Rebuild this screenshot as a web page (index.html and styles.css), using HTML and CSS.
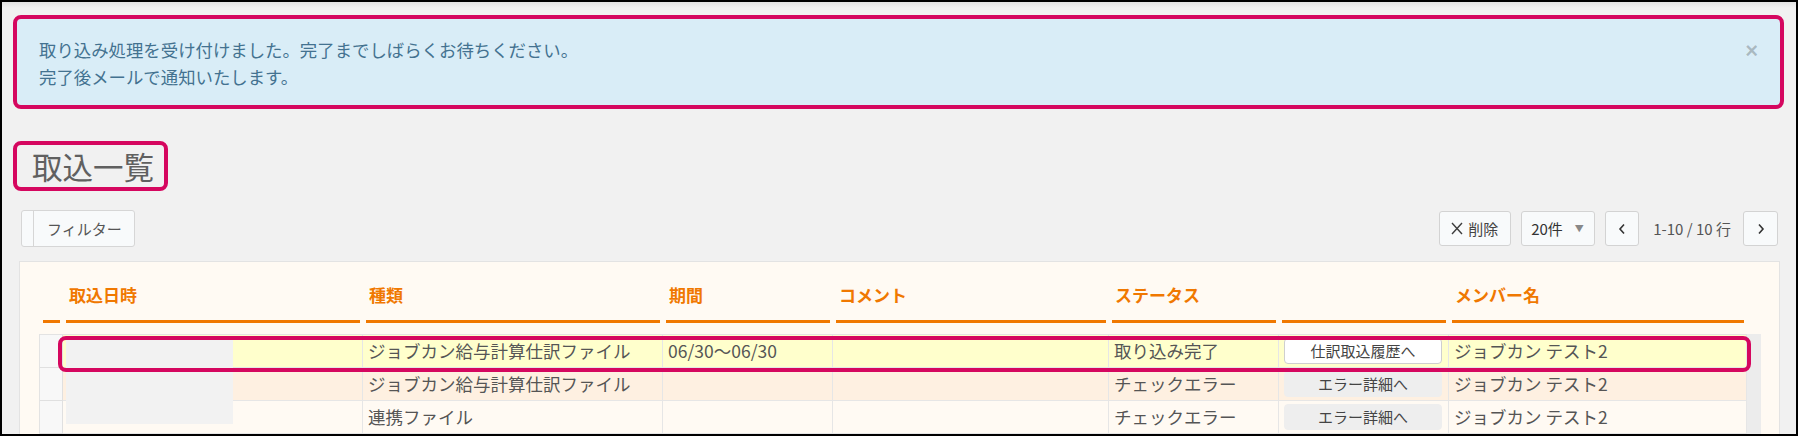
FILE: index.html
```html
<!DOCTYPE html>
<html lang="ja">
<head>
<meta charset="utf-8">
<title>取込一覧</title>
<link rel="stylesheet" href="styles.css">
</head>
<body>
<div class="frame">
  <div class="alert">
    <div class="alert-text">取り込み処理を受け付けました。完了までしばらくお待ちください。<br>完了後メールで通知いたします。</div>
    <span class="alert-close">×</span>
  </div>

  <h1 class="title">取込一覧</h1>

  <div class="toolbar">
    <div class="filter-btn"><span class="filter-handle"></span><span class="filter-label">フィルター</span></div>
    <div class="tools">
      <div class="btn btn-delete">
        <svg class="x-icon" width="12" height="13" viewBox="0 0 12 13"><path d="M1 1 L11 12 M11 1 L1 12" stroke="#3d3d3d" stroke-width="1.4" fill="none"/></svg>
        <span>削除</span>
      </div>
      <div class="btn btn-select"><span>20件</span><span class="caret">▼</span></div>
      <div class="btn btn-nav">
        <svg width="8" height="12" viewBox="0 0 8 12"><path d="M6 1.5 L2 6 L6 10.5" stroke="#333" stroke-width="1.6" fill="none"/></svg>
      </div>
      <span class="page-info">1-10 / 10 行</span>
      <div class="btn btn-nav btn-next">
        <svg width="8" height="12" viewBox="0 0 8 12"><path d="M2 1.5 L6 6 L2 10.5" stroke="#333" stroke-width="1.6" fill="none"/></svg>
      </div>
    </div>
  </div>

  <div class="panel">
    <div class="thead">
      <div class="th"></div>
      <div class="th">取込日時</div>
      <div class="th">種類</div>
      <div class="th">期間</div>
      <div class="th">コメント</div>
      <div class="th">ステータス</div>
      <div class="th"></div>
      <div class="th">メンバー名</div>
    </div>

    <div class="tbody-wrap">
      <div class="tbody">
        <div class="row row-yellow">
          <div class="cell num"></div>
          <div class="cell"></div>
          <div class="cell">ジョブカン給与計算仕訳ファイル</div>
          <div class="cell">06/30～06/30</div>
          <div class="cell"></div>
          <div class="cell">取り込み完了</div>
          <div class="cell act"><span class="act-btn act-white">仕訳取込履歴へ</span></div>
          <div class="cell">ジョブカン テスト2</div>
        </div>
        <div class="row row-orange">
          <div class="cell num"></div>
          <div class="cell"></div>
          <div class="cell">ジョブカン給与計算仕訳ファイル</div>
          <div class="cell"></div>
          <div class="cell"></div>
          <div class="cell">チェックエラー</div>
          <div class="cell act"><span class="act-btn act-gray">エラー詳細へ</span></div>
          <div class="cell">ジョブカン テスト2</div>
        </div>
        <div class="row row-cream">
          <div class="cell num"></div>
          <div class="cell"></div>
          <div class="cell">連携ファイル</div>
          <div class="cell"></div>
          <div class="cell"></div>
          <div class="cell">チェックエラー</div>
          <div class="cell act"><span class="act-btn act-gray">エラー詳細へ</span></div>
          <div class="cell">ジョブカン テスト2</div>
        </div>
      </div>
      <div class="strip"></div>
      <div class="redact"></div>
      <div class="row-mark"></div>
    </div>
  </div>
</div>
</body>
</html>
```

FILE: styles.css
```css
* { box-sizing: border-box; }

html, body {
  margin: 0;
  padding: 0;
}

body {
  font-family: "Noto Sans CJK JP", "Noto Sans", sans-serif;
  color: #555;
  background: #f1f1f1;
}

.frame {
  width: 1798px;
  height: 436px;
  border: 2px solid #000;
  overflow: hidden;
  background: linear-gradient(to bottom, #e2e2e2 0, #f1f1f1 6px) #f1f1f1;
}

/* ---------- alert ---------- */
.alert {
  margin: 13px 12px 0 11px;
  height: 94px;
  border: 4px solid #d5075f;
  border-radius: 8px;
  background: #d9edf7;
  padding: 17px 22px 0 22px;
  display: flex;
  align-items: flex-start;
}

.alert-text {
  flex: 1;
  font-size: 17.4px;
  line-height: 27px;
  color: #437290;
}

.alert-close {
  font-family: "Liberation Sans", sans-serif;
  font-size: 22px;
  font-weight: 700;
  line-height: 29px;
  color: rgba(0, 0, 0, 0.22);
}

/* ---------- title ---------- */
.title {
  margin: 32px 0 0 11px;
  width: fit-content;
  height: 50px;
  border: 4px solid #d5075f;
  border-radius: 8px;
  padding: 0 10px 0 15px;
  font-size: 30.5px;
  line-height: 42px;
  font-weight: 400;
  color: #606060;
}

/* ---------- toolbar ---------- */
.toolbar {
  margin: 19px 18px 0 19px;
  height: 37px;
  display: flex;
  justify-content: space-between;
  align-items: center;
}

.filter-btn {
  height: 37px;
  width: 114px;
  display: flex;
  border: 1px solid #d6d6d6;
  border-radius: 3px;
  background: #f8fafb;
}

.filter-handle {
  width: 12px;
  border-right: 1px solid #d6d6d6;
}

.filter-label {
  padding-left: 13px;
  font-size: 15px;
  line-height: 35px;
  color: #555;
}

.tools {
  display: flex;
  align-items: center;
  height: 37px;
}

.btn {
  height: 35px;
  border: 1px solid #d3d3d3;
  border-radius: 3px;
  background: #f8fafb;
  display: flex;
  align-items: center;
  font-size: 15px;
  color: #444;
}

.btn-delete {
  width: 72px;
  padding-left: 11px;
  gap: 5px;
}

.btn-select {
  width: 74px;
  margin-left: 10px;
  padding-left: 9px;
  color: #333;
}

.caret {
  font-size: 9px;
  color: #888;
  margin-left: 12px;
}

.btn-nav {
  width: 34px;
  margin-left: 10px;
  justify-content: center;
}

.btn-next {
  width: 35px;
  margin-left: 12px;
}

.page-info {
  margin-left: 14px;
  font-size: 15px;
  color: #555;
}

/* ---------- panel ---------- */
.panel {
  margin: 14px 16px 0 17px;
  height: 300px;
  border: 1px solid #e3e3e3;
  background: #fffaf3;
  padding: 0 18px 0 19px;
}

.thead,
.row {
  display: grid;
  grid-template-columns: 23px 300px 300px 170px 276px 170px 170px 298px;
}

.thead {
  padding-left: 1px;
}

.th {
  margin: 0 3px;
  padding: 21px 0 13px 3px;
  line-height: 24px;
  height: 61px;
  font-size: 17px;
  font-weight: 700;
  color: #f07800;
  border-bottom: 3px solid #f07800;
  white-space: nowrap;
}

.tbody-wrap {
  position: relative;
  margin-top: 11px;
  display: flex;
}

.tbody {
  border-top: 1px solid #e3e3e3;
  border-left: 1px solid #e3e3e3;
}

.cell {
  height: 33px;
  border-right: 1px solid #e6e6e6;
  border-bottom: 1px solid #e6e6e6;
  padding-left: 5px;
  font-size: 17.5px;
  line-height: 32px;
  white-space: nowrap;
  color: #555;
}

.row-yellow .cell { background: #ffffcc; }
.row-orange .cell { background: #fef0e1; }
.row-cream .cell { background: #fffaf3; }
.row .cell.num { background: #f8f8f8; border-right-color: #e0e0e0; border-bottom-color: #e0e0e0; }

.cell.act {
  padding: 3px 6px 0 5px;
}

.act-btn {
  display: block;
  height: 26px;
  border-radius: 4px;
  font-size: 15px;
  line-height: 24px;
  text-align: center;
  color: #444;
}

.act-white {
  background: #fff;
  border: 1px solid #cfcfcf;
}

.act-gray {
  background: #eeeeee;
  border: 1px solid #eeeeee;
}

.strip {
  width: 14px;
  background: #ececec;
}

.redact {
  position: absolute;
  left: 27px;
  top: 6px;
  width: 167px;
  height: 84px;
  background: #f2f2f2;
}

.row-mark {
  position: absolute;
  left: 19px;
  top: 2px;
  width: 1693px;
  height: 36px;
  border: 4px solid #d5075f;
  border-radius: 8px;
}
```
